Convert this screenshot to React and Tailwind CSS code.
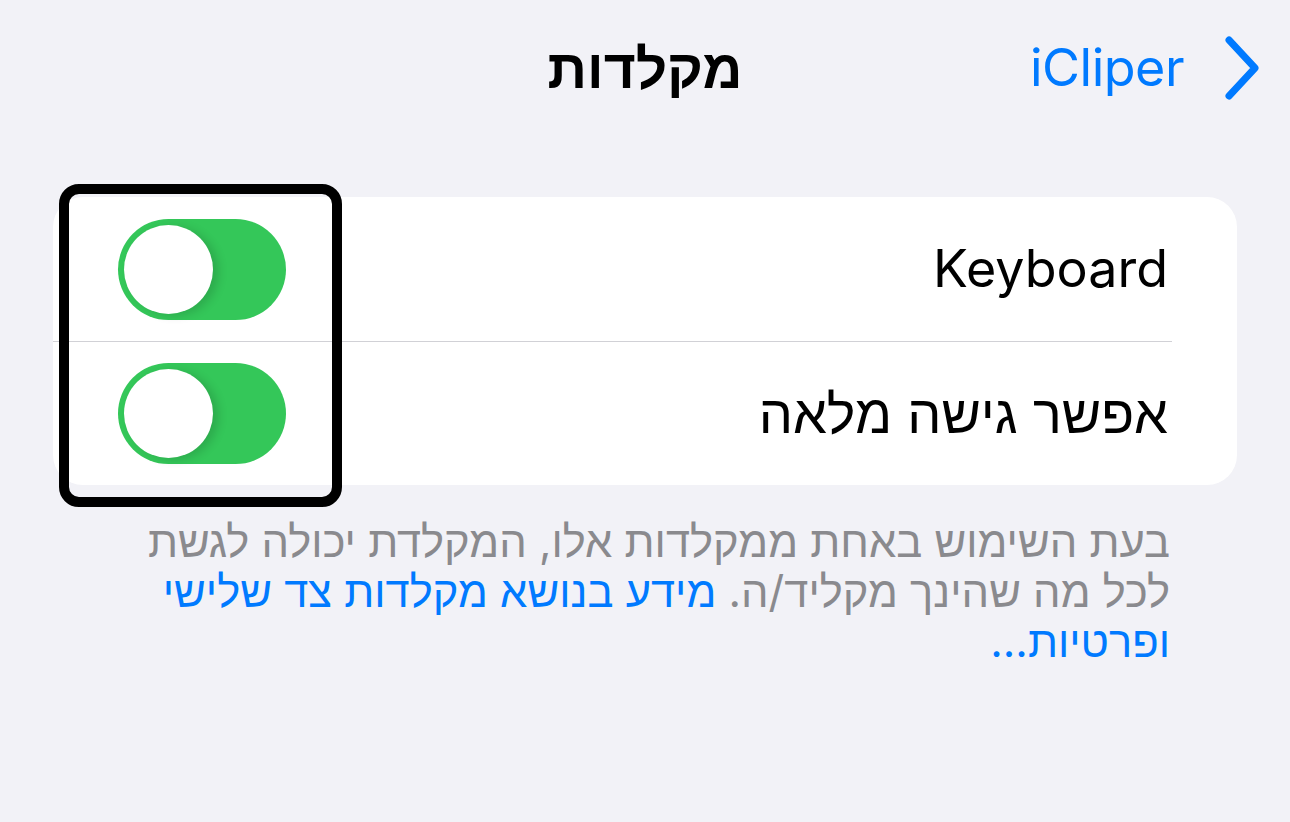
import React, { useState } from 'react';

const Toggle = ({ on, onChange }) => (
  <button
    onClick={onChange}
    dir="ltr"
    className={`w-[168px] h-[101px] rounded-full flex items-center px-[6px] ${on ? 'bg-[#34c759]' : 'bg-[#e9e9eb]'}`}
  >
    <span className="block w-[89px] h-[89px] rounded-full bg-white shadow-[6px_2px_10px_rgba(0,0,0,0.14)]" />
  </button>
);

const App = () => {
  const [keyboard, setKeyboard] = useState(true);
  const [fullAccess, setFullAccess] = useState(true);

  return (
    <div
      dir="rtl"
      className="w-[1290px] h-[822px] bg-[#f2f2f7] overflow-hidden"
      style={{ fontFamily: 'Inter, "Liberation Sans", "DejaVu Sans", sans-serif' }}
    >
      {/* nav bar */}
      <div className="grid grid-cols-[1fr_auto_1fr] items-center h-[136px]">
        <button className="flex items-center gap-[40px] pr-[30px] justify-self-start text-[#007aff]">
          <svg width="36" height="64" viewBox="0 0 36 64" fill="none">
            <path d="M31 4 L5 32 L31 60" stroke="#007aff" strokeWidth="7" strokeLinecap="round" strokeLinejoin="round" transform="matrix(-1 0 0 1 36 0)" />
          </svg>
          <span className="text-[52px] leading-none tracking-[-0.5px]">iCliper</span>
        </button>
        <h1 className="text-[55px] font-bold text-black leading-none">מקלדות</h1>
        <div />
      </div>

      {/* settings group */}
      <div className="relative mt-[61px] mx-[53px] bg-white rounded-[30px]">
        <div className="h-[144px] flex items-center justify-between pr-[69px] pl-[65px]">
          <span className="text-[52px] text-black leading-none">Keyboard</span>
          <Toggle on={keyboard} onChange={() => setKeyboard(!keyboard)} />
        </div>
        <div className="h-px bg-[#d1d1d6] mr-[65px]" />
        <div className="h-[143px] flex items-center justify-between pr-[69px] pl-[65px]">
          <span className="text-[54px] text-black leading-none">אפשר גישה מלאה</span>
          <Toggle on={fullAccess} onChange={() => setFullAccess(!fullAccess)} />
        </div>

        {/* highlight frame */}
        <div className="absolute left-[6px] top-[-13px] w-[283px] h-[323px] border-[10px] border-black rounded-[20px] pointer-events-none" />
      </div>

      {/* footer */}
      <p className="mt-[31px] pr-[120px] text-[43.5px] leading-[50px] text-[#8a8a8e] whitespace-nowrap">
        בעת השימוש באחת ממקלדות אלו, המקלדת יכולה לגשת
        <br />
        לכל מה שהינך מקליד/ה.{' '}
        <a href="#" className="text-[#007aff]">
          מידע בנושא מקלדות צד שלישי
          <br />
          ופרטיות...
        </a>
      </p>
    </div>
  );
};

export default App;
